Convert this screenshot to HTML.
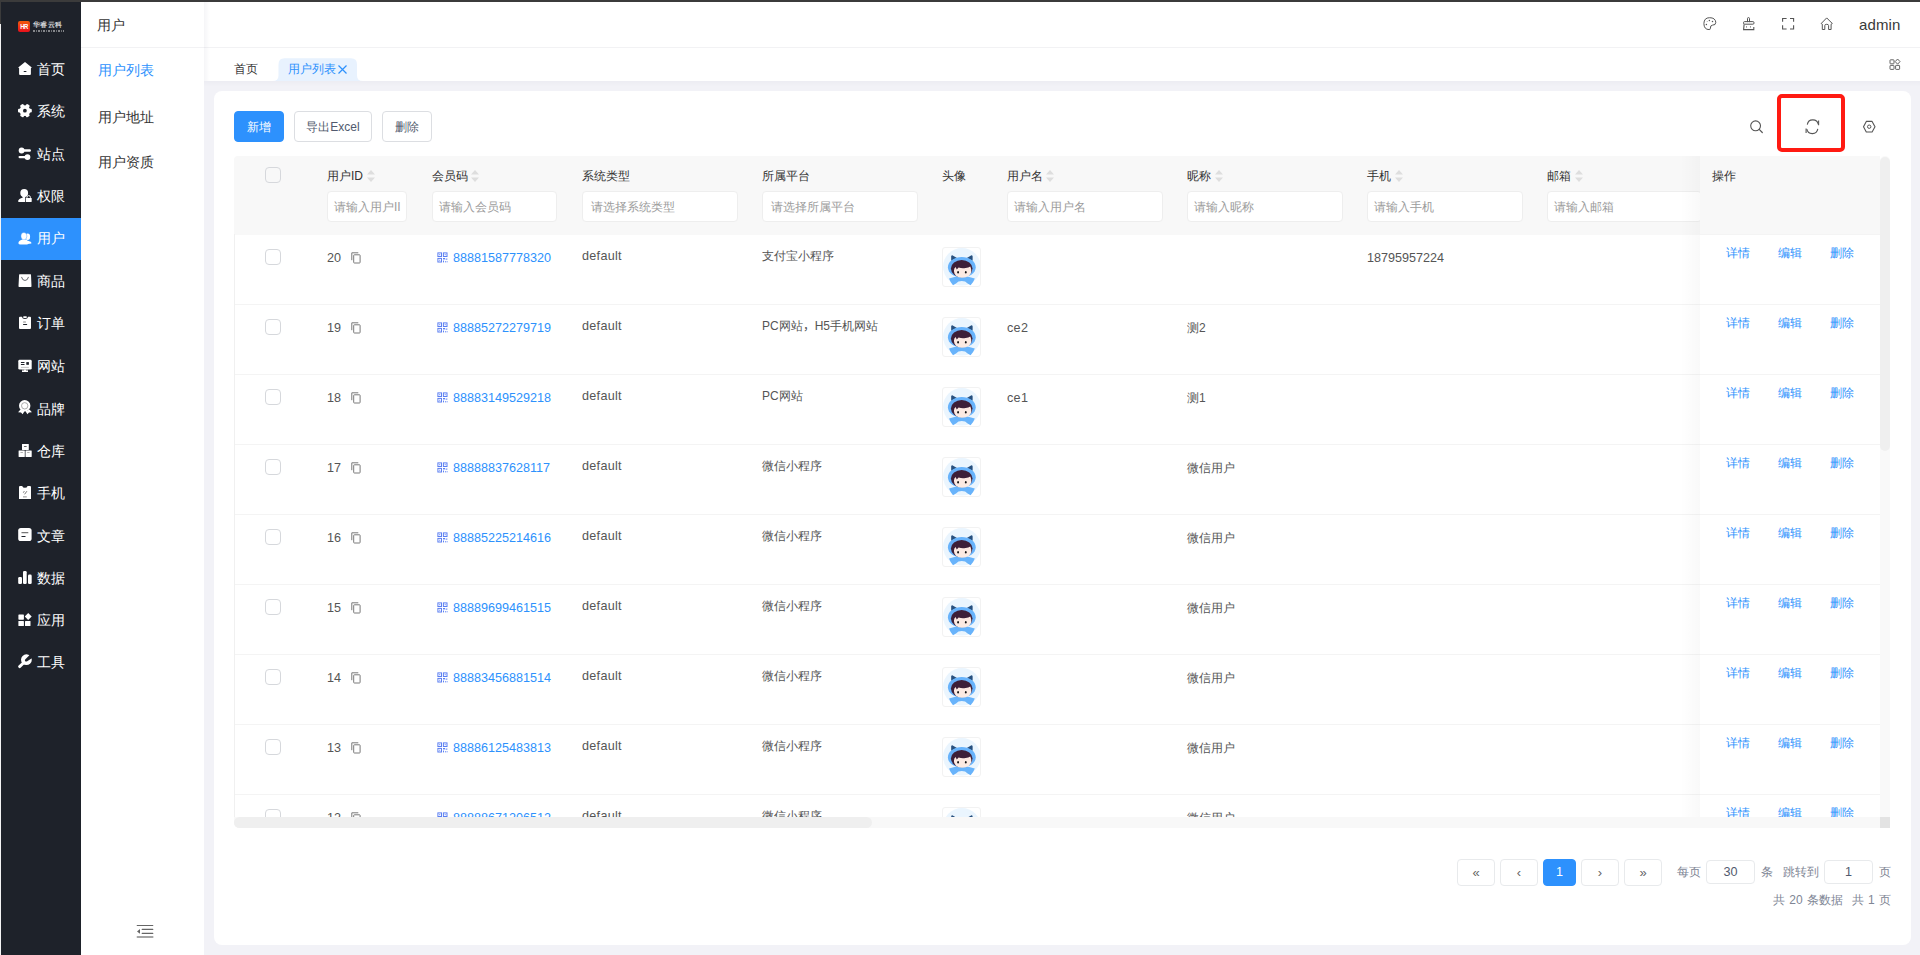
<!DOCTYPE html>
<html><head><meta charset="utf-8"><style>
*{box-sizing:border-box;margin:0;padding:0}
html,body{width:1920px;height:955px;overflow:hidden;background:#f2f2f7;font-family:"Liberation Sans",sans-serif;color:#333}
.abs{position:absolute}
.mtxt{position:absolute;left:37px;height:20px;line-height:20px;font-size:14px;color:#fff;font-weight:500}
#side2 .t{position:absolute;left:16px;top:13px;font-size:14px;line-height:20px;color:#333}
#side2 .it{position:absolute;left:17px;font-size:14px;line-height:20px;color:#333}
.btn{position:absolute;top:20px;height:31px;border-radius:4px;font-size:12px;font-weight:500;line-height:29px;padding-top:1px;text-align:center;border:1px solid #dcdee2;color:#515a6e;background:#fff}
.btn.pri{background:#2d91fd;border-color:#2d91fd;color:#fff}
.cb{width:16px;height:16px;border:1px solid #d6d8dc;border-radius:4px;background:#fff}
.hl{position:absolute;top:169px;font-size:12px;line-height:14px;color:#333;white-space:nowrap;font-weight:500}
.inp{position:absolute;top:191px;height:31px;padding-top:1px;border:1px solid #eeeeee;border-radius:4px;background:#fff;font-size:12px;line-height:28px;padding-left:6px;color:#9c9c9c;white-space:nowrap;overflow:hidden}
.td{position:absolute;font-size:12px;line-height:20px;color:#555;white-space:nowrap;font-weight:500}
.td.num{font-size:12.6px}
.td.lat{font-size:12.6px;letter-spacing:.3px}
.link{color:#2d91fd}
.op{position:absolute;font-size:12px;line-height:20px;color:#2d91fd;font-weight:500}
.pg{position:absolute;top:859px;height:27px;width:38px;border:1px solid #e8eaec;border-radius:4px;background:#fff;text-align:center;line-height:25px;font-size:13px;color:#666}
.pt{position:absolute;top:864px;font-size:12px;line-height:16px;color:#808695;white-space:nowrap}
.pin{position:absolute;top:860px;height:24px;width:49px;border:1px solid #e8eaec;border-radius:4px;text-align:center;line-height:22px;font-size:12.6px;color:#515a6e;background:#fff}
</style></head><body>
<div class="abs" style="left:0;top:0;width:1920px;height:2px;background:#3b3b3b;z-index:50"></div>
<div class="abs" style="left:0;top:0;width:1px;height:24px;background:#3b3b3b;z-index:50"></div>
<div class="abs" style="left:0;top:24px;width:1px;height:931px;background:#f4f4f4;z-index:50"></div>
<div class="abs" style="left:1px;top:2px;width:80px;height:953px;background:#1e222a"></div>
<div class="abs" style="left:18px;top:20.5px;width:12px;height:11.7px;border-radius:2px;background:linear-gradient(#f25a0c,#e8101c)"></div>
<div class="abs" style="left:18px;top:22.5px;width:12px;text-align:center;color:#fff;font-size:7px;font-weight:bold;line-height:8px;letter-spacing:-.6px;transform:scaleX(.85)">HR</div>
<div class="abs" style="left:33px;top:20px;color:#cfd0d2;font-size:7.4px;line-height:9px;font-weight:bold;letter-spacing:.4px">华睿云科</div>
<div class="abs" style="left:33px;top:30px;width:31px;height:2px;background:repeating-linear-gradient(90deg,#85878b 0 2px,#1e222a 2px 3px,#6d6f73 3px 4px,#1e222a 4px 5px)"></div>
<svg class="abs" style="left:14px;top:58px" width="22" height="22" viewBox="0 0 22 22"><path d="M11 3.9 L17.8 9.6 L16.9 10.2 V16 Q16.9 17 15.9 17 H6.1 Q5.1 17 5.1 16 V10.2 L4.2 9.6 Z" fill="#fff"/><rect x="9.6" y="13" width="2.9" height="1" rx=".5" fill="#1e222a"/></svg>
<div class="mtxt" style="top:59px">首页</div>
<svg class="abs" style="left:14px;top:100px" width="22" height="22" viewBox="0 0 22 22"><g transform="translate(10.9 10.7)" fill="#fff"><circle r="5.4"/><rect x="-1.9" y="-6.9" width="3.8" height="3.4" rx="1.1" transform="rotate(30)"/><rect x="-1.9" y="-6.9" width="3.8" height="3.4" rx="1.1" transform="rotate(90)"/><rect x="-1.9" y="-6.9" width="3.8" height="3.4" rx="1.1" transform="rotate(150)"/><rect x="-1.9" y="-6.9" width="3.8" height="3.4" rx="1.1" transform="rotate(210)"/><rect x="-1.9" y="-6.9" width="3.8" height="3.4" rx="1.1" transform="rotate(270)"/><rect x="-1.9" y="-6.9" width="3.8" height="3.4" rx="1.1" transform="rotate(330)"/></g><circle cx="10.9" cy="10.7" r="1.9" fill="#1e222a"/></svg>
<div class="mtxt" style="top:101px">系统</div>
<svg class="abs" style="left:14px;top:143px" width="22" height="22" viewBox="0 0 22 22"><circle cx="7.6" cy="7.5" r="2.9" fill="#fff"/><path d="M7.6 6.3 H16.3 L17.1 7.5 L16.3 8.7 H7.6Z" fill="#fff"/><circle cx="13.5" cy="14.1" r="2.9" fill="#fff"/><rect x="4.5" y="13" width="9" height="2.2" rx="1.1" fill="#fff"/></svg>
<div class="mtxt" style="top:144px">站点</div>
<svg class="abs" style="left:14px;top:185px" width="22" height="22" viewBox="0 0 22 22"><ellipse cx="10.2" cy="7.9" rx="3.9" ry="4" fill="#fff"/><path d="M8.3 11 L8.7 12.7 Q4.6 13.7 4.1 15.9 Q4 17 5 17 H11.1 V12.8 L11.7 11Z" fill="#fff"/><path d="M13 13.2 V12.3 Q13 10.6 14.7 10.6 Q16.4 10.6 16.4 12.3 V13.2" fill="none" stroke="#fff" stroke-width=".9"/><rect x="11.8" y="13.1" width="5.9" height="3.9" rx=".4" fill="#fff"/></svg>
<div class="mtxt" style="top:186px">权限</div>
<div class="abs" style="left:1px;top:218px;width:80px;height:42px;background:#2d91fd"></div>
<svg class="abs" style="left:14px;top:227px" width="22" height="22" viewBox="0 0 22 22"><ellipse cx="13.7" cy="9.8" rx="2.4" ry="3.3" fill="#fff"/><path d="M14 13.8 Q17.4 14.5 17.6 16 Q17.4 16.8 16 16.8 H12 Z" fill="#fff"/><ellipse cx="9.9" cy="9.1" rx="3" ry="3.7" fill="#fff" stroke="#2d91fd" stroke-width=".4"/><path d="M8.3 12.5 Q4.4 13.6 4.4 16.2 Q4.6 17.4 6.5 17.5 H13 Q14.8 17.4 14.9 16.3 Q14.7 13.6 11.5 12.6 Z" fill="#fff"/></svg>
<div class="mtxt" style="top:228px">用户</div>
<svg class="abs" style="left:14px;top:270px" width="22" height="22" viewBox="0 0 22 22"><path d="M5.6 4.2 H16.6 Q17 4.2 17 4.7 L17.5 16.3 Q17.5 17 16.8 17 H5.2 Q4.5 17 4.5 16.3 L5.1 4.7 Q5.1 4.2 5.6 4.2Z" fill="#fff"/><path d="M7.6 7.3 Q8.4 10.5 11 10.5 Q13.6 10.5 14.4 7.3" fill="none" stroke="#4a4d55" stroke-width=".85" stroke-linecap="round"/></svg>
<div class="mtxt" style="top:271px">商品</div>
<svg class="abs" style="left:14px;top:312px" width="22" height="22" viewBox="0 0 22 22"><path d="M5 5.7 Q5 4.8 6 4.8 H7.9 Q8.3 7 11 7 Q13.7 7 14.1 4.8 H16 Q17 4.8 17 5.7 V16 Q17 17 16 17 H6 Q5 17 5 16Z" fill="#fff"/><rect x="9.1" y="4.2" width="3.8" height="1.7" rx=".85" fill="#fff"/><rect x="9" y="9.4" width="3" height="1.1" rx=".5" fill="#888"/><rect x="9" y="12" width="4.2" height="1.1" rx=".55" fill="#1e222a"/></svg>
<div class="mtxt" style="top:313px">订单</div>
<svg class="abs" style="left:14px;top:354px" width="22" height="22" viewBox="0 0 22 22"><rect x="4.3" y="5.8" width="13.4" height="9.8" rx="1.4" fill="#fff"/><rect x="8" y="15.4" width="6" height="2.6" fill="#fff"/><rect x="6.9" y="8" width="3.6" height="1" fill="#1e222a"/><rect x="6.9" y="10" width="3.6" height="1" fill="#1e222a"/><rect x="12.3" y="8.1" width="2.6" height="2.7" fill="#1e222a"/><rect x="6.9" y="12.9" width="8" height=".9" fill="#bbb"/><rect x="8" y="15.4" width="2" height="1.4" fill="#999"/><rect x="12" y="15.4" width="2" height="1.4" fill="#999"/></svg>
<div class="mtxt" style="top:356px">网站</div>
<svg class="abs" style="left:14px;top:397px" width="22" height="22" viewBox="0 0 22 22"><path d="M6.5 12.5 L4.1 15.2 L7 15.6 L8.6 17.3 L10.5 14.2Z" fill="#fff"/><path d="M15.5 12.5 L17.9 15.2 L15 15.6 L13.4 17.3 L11.5 14.2Z" fill="#fff"/><circle cx="10.7" cy="8.8" r="5.7" fill="#fff"/><circle cx="10.7" cy="8.8" r="3.2" fill="none" stroke="#888" stroke-width=".7"/></svg>
<div class="mtxt" style="top:399px">品牌</div>
<svg class="abs" style="left:14px;top:439px" width="22" height="22" viewBox="0 0 22 22"><rect x="8" y="4.9" width="6.8" height="6" rx=".3" fill="#fff"/><rect x="4.6" y="11.6" width="6.2" height="6.3" rx=".3" fill="#fff"/><rect x="11.5" y="11.6" width="6.2" height="6.3" rx=".3" fill="#fff"/><rect x="9.8" y="7.1" width="3" height=".9" rx=".45" fill="#666"/><rect x="6.3" y="13.2" width="2.8" height=".8" rx=".4" fill="#999"/><rect x="13" y="13.2" width="2.8" height=".8" rx=".4" fill="#999"/></svg>
<div class="mtxt" style="top:441px">仓库</div>
<svg class="abs" style="left:14px;top:481px" width="22" height="22" viewBox="0 0 22 22"><path d="M5 5.8 Q5 4.9 6.2 4.9 H8.2 Q8.8 6.8 10.9 6.8 Q13 6.8 13.6 4.9 H15.8 Q17 4.9 17 5.8 V17.9 H5Z" fill="#fff"/><path d="M10.3 10.1 L9.3 11.7 M12.9 10.2 L10.6 13.3" stroke="#555" stroke-width=".8"/><rect x="9" y="15.2" width="3.8" height="1.3" fill="#aaa"/></svg>
<div class="mtxt" style="top:483px">手机</div>
<svg class="abs" style="left:14px;top:524px" width="22" height="22" viewBox="0 0 22 22"><rect x="4.2" y="4" width="13.4" height="13" rx="2.6" fill="#fff"/><rect x="7.4" y="8.1" width="7" height="1.1" rx=".5" fill="#777"/><rect x="7.4" y="12" width="4.2" height="1" rx=".5" fill="#1e222a"/></svg>
<div class="mtxt" style="top:526px">文章</div>
<svg class="abs" style="left:14px;top:566px" width="22" height="22" viewBox="0 0 22 22"><rect x="4.2" y="11" width="3.8" height="7" rx="1.2" fill="#fff"/><rect x="9" y="5" width="3.7" height="13" rx="1.3" fill="#fff"/><rect x="14" y="8.6" width="3.7" height="9.4" rx="1.3" fill="#fff"/></svg>
<div class="mtxt" style="top:568px">数据</div>
<svg class="abs" style="left:14px;top:608px" width="22" height="22" viewBox="0 0 22 22"><rect x="4.4" y="6.4" width="5.5" height="5.3" rx=".6" fill="#fff"/><rect x="4.4" y="13" width="5.5" height="5" rx=".5" fill="#fff"/><rect x="11" y="13" width="5.5" height="5" rx=".5" fill="#fff"/><path d="M14.2 5 L17.7 8.6 L14.2 12 L10.8 8.6Z" fill="#fff"/></svg>
<div class="mtxt" style="top:610px">应用</div>
<svg class="abs" style="left:14px;top:650px" width="22" height="22" viewBox="0 0 22 22"><circle cx="12.4" cy="9.7" r="5.4" fill="#fff"/><path d="M10.2 12.2 L5.6 16.6" stroke="#fff" stroke-width="2.9" stroke-linecap="round"/><path d="M11 10.9 Q10.6 10 11.4 9.2 L15.6 5 L18.8 5.4 L19 7.5 L13.2 11.2 Q12 11.8 11 10.9Z" fill="#1e222a"/></svg>
<div class="mtxt" style="top:652px">工具</div>
<div id="side2" class="abs" style="left:81px;top:2px;width:123px;height:953px;background:#fff">
  <div class="t">用户</div>
  <div class="it" style="top:58px;color:#2d91fd">用户列表</div>
  <div class="it" style="top:105px">用户地址</div>
  <div class="it" style="top:150px">用户资质</div>
</div>
<svg class="abs" style="left:130px;top:920px" width="30" height="22" viewBox="0 0 30 22">
 <path d="M7.2 5.5 H22.8 M12.2 9.4 H22.8 M12.2 13.4 H22.8" stroke="#666" stroke-width="1.1" stroke-linecap="round"/>
 <path d="M7.3 17.1 H22.8" stroke="#888" stroke-width="1.5" stroke-linecap="round"/>
 <path d="M7 11.4 L10 9 V13.8Z" fill="#666"/>
</svg>
<div class="abs" style="left:204px;top:2px;width:1716px;height:45px;background:#fff"></div>
<div class="abs" style="left:204px;top:48px;width:1716px;height:33px;background:#fff"></div>
<div class="abs" style="left:81px;top:47px;width:1839px;height:1px;background:#f2f2f4"></div>
<div class="abs" style="left:204px;top:2px;width:6px;height:79px;background:linear-gradient(90deg,rgba(0,0,60,.04),rgba(0,0,60,0))"></div>
<div class="abs" style="left:204px;top:81px;width:1716px;height:6px;background:linear-gradient(rgba(0,0,60,.025),rgba(0,0,60,0))"></div>

<svg class="abs" style="left:1700px;top:14px" width="60" height="20" viewBox="0 0 60 20">
 <path d="M9.6 3.7 Q4 3.7 3.9 9.6 Q4 15.6 9.2 15.6 Q10.4 15.6 10.4 14.2 Q10.2 11.2 12.6 11.1 Q15.8 11.3 15.8 8.3 Q15.3 3.7 9.6 3.7Z" fill="none" stroke="#555" stroke-width="1"/>
 <circle cx="9.4" cy="6.5" r=".75" fill="#555"/><circle cx="12.5" cy="7.4" r=".75" fill="#555"/><circle cx="6.4" cy="10.4" r=".75" fill="#555"/><circle cx="7.2" cy="7.5" r=".6" fill="#aaa"/>
 <path d="M47.5 8.1 V4.4 Q47.5 3.6 48.5 3.6 Q49.5 3.6 49.5 4.4 V8.1" fill="none" stroke="#555" stroke-width="1"/>
 <rect x="43.5" y="7.6" width="10.5" height="2.6" rx="1.1" fill="none" stroke="#555" stroke-width="1"/>
 <path d="M44.1 10.4 L43.6 15.6 H53.8 V13" fill="none" stroke="#555" stroke-width="1.1"/>
 <path d="M46.5 12.2 V13.6 M50.5 12.2 V13.6" stroke="#666" stroke-width=".8"/>
</svg>
<svg class="abs" style="left:1778px;top:14px" width="60" height="20" viewBox="0 0 60 20">
 <path d="M4.6 7.7 V4.5 H8.6 M12 4.5 H15.6 V7.7 M15.6 11.2 V15 H12 M8.6 15 H4.6 V11.2" fill="none" stroke="#555" stroke-width="1.1"/>
 <path d="M43.2 9.5 L48.7 3.9 L54.3 9.5 L53.1 10.2 V15.5 H50.6 V11.5 Q50.6 10.3 48.7 10.3 Q46.8 10.3 46.8 11.5 V15.5 H44.3 V10.2 Z" fill="none" stroke="#555" stroke-width="1" stroke-linejoin="round"/>
</svg>

<div class="abs" style="left:1859px;top:16px;font-size:15px;line-height:18px;color:#3a3a3a;letter-spacing:.1px">admin</div>
<div class="abs" style="left:234px;top:61px;font-size:12px;line-height:16px;color:#333">首页</div>
<svg class="abs" style="left:270px;top:57px" width="96" height="24" viewBox="0 0 96 24"><path d="M2.5 24 Q8.5 24 8.5 18.5 V7.5 Q8.5 1.3 14.5 1.3 H81 Q87 1.3 87 7.5 V18.5 Q87 24 93 24Z" fill="#e8f2fe"/></svg>
<div class="abs" style="left:288px;top:61px;font-size:12px;line-height:16px;color:#2d91fd">用户列表</div>
<svg class="abs" style="left:337px;top:64px" width="11" height="11" viewBox="0 0 11 11"><path d="M1.5 1.5 L9.5 9.5 M9.5 1.5 L1.5 9.5" stroke="#2d91fd" stroke-width="1.2"/></svg>
<svg class="abs" style="left:1886px;top:56px" width="18" height="18" viewBox="0 0 18 18">
<rect x="4" y="3.8" width="4" height="4" rx=".6" fill="none" stroke="#555" stroke-width=".9"/>
<rect x="4" y="9.4" width="4" height="4" rx=".6" fill="none" stroke="#555" stroke-width=".9"/>
<rect x="9.6" y="9.4" width="4" height="4" rx=".6" fill="none" stroke="#555" stroke-width=".9"/>
<path d="M11.6 3 L14 5.6 L11.6 8.2 L9.2 5.6Z" fill="none" stroke="#555" stroke-width=".9" stroke-linejoin="round"/>
</svg>
<div class="abs" style="left:214px;top:91px;width:1697px;height:854px;background:#fff;border-radius:8px"></div>
<div class="btn pri" style="left:234px;top:111px;width:50px">新增</div>
<div class="btn" style="left:294px;top:111px;width:78px">导出Excel</div>
<div class="btn" style="left:382px;top:111px;width:50px">删除</div>
<svg class="abs" style="left:1745px;top:115px" width="140" height="24" viewBox="0 0 140 24">
 <circle cx="10.6" cy="10.8" r="4.9" fill="none" stroke="#555" stroke-width="1.1"/>
 <path d="M14.2 14.4 L17.3 17.5" stroke="#555" stroke-width="1.2" stroke-linecap="round"/>
 <path d="M73.3 9.3 A5.6 5.6 0 0 0 62.3 9.6" fill="none" stroke="#555" stroke-width="1.1"/>
 <path d="M61.8 14.2 A5.6 5.6 0 0 0 72.8 13.9" fill="none" stroke="#555" stroke-width="1.1"/>
 <path d="M73.6 5.5 V10.2" fill="none" stroke="#555" stroke-width="1.1"/>
 <path d="M61.1 13.4 V18" fill="none" stroke="#555" stroke-width="1.1"/>
 <path d="M121.3 6.4 H127.1 L130 11.8 L127.1 17 H121.3 L118.5 11.8Z" fill="none" stroke="#555" stroke-width="1.1" stroke-linejoin="round"/>
 <circle cx="124.2" cy="11.7" r="1.7" fill="none" stroke="#555" stroke-width="1"/>
</svg>
<div class="abs" style="left:1777px;top:94px;width:68px;height:58px;border:4px solid #ff1a12;border-radius:5px"></div>
<div class="abs" style="left:234px;top:156px;width:1646px;height:661px;overflow:hidden">
<div class="abs" style="left:-234px;top:-156px;width:1920px;height:955px">
<div class="abs" style="left:234px;top:156px;width:1646px;height:79px;background:#f8f8f8;border-radius:4px 4px 0 0"></div>
<div class="abs cb" style="left:265px;top:167px;background:transparent"></div>
<div class="hl" style="left:327px">用户ID</div>
<svg class="abs" style="left:366px;top:169px" width="10" height="14" viewBox="0 0 10 14"><path d="M1 5.5 L5 1 L9 5.5Z M1 8.5 L5 13 L9 8.5Z" fill="#dedede"/></svg>
<div class="inp" style="left:327px;width:80px;padding-left:6px">请输入用户II</div>
<div class="hl" style="left:432px">会员码</div>
<svg class="abs" style="left:470px;top:169px" width="10" height="14" viewBox="0 0 10 14"><path d="M1 5.5 L5 1 L9 5.5Z M1 8.5 L5 13 L9 8.5Z" fill="#dedede"/></svg>
<div class="inp" style="left:432px;width:125px;padding-left:6px">请输入会员码</div>
<div class="hl" style="left:582px">系统类型</div>
<div class="inp" style="left:582px;width:156px;padding-left:8px">请选择系统类型</div>
<div class="hl" style="left:762px">所属平台</div>
<div class="inp" style="left:762px;width:156px;padding-left:8px">请选择所属平台</div>
<div class="hl" style="left:942px">头像</div>
<div class="hl" style="left:1007px">用户名</div>
<svg class="abs" style="left:1045px;top:169px" width="10" height="14" viewBox="0 0 10 14"><path d="M1 5.5 L5 1 L9 5.5Z M1 8.5 L5 13 L9 8.5Z" fill="#dedede"/></svg>
<div class="inp" style="left:1007px;width:156px;padding-left:6px">请输入用户名</div>
<div class="hl" style="left:1187px">昵称</div>
<svg class="abs" style="left:1214px;top:169px" width="10" height="14" viewBox="0 0 10 14"><path d="M1 5.5 L5 1 L9 5.5Z M1 8.5 L5 13 L9 8.5Z" fill="#dedede"/></svg>
<div class="inp" style="left:1187px;width:156px;padding-left:6px">请输入昵称</div>
<div class="hl" style="left:1367px">手机</div>
<svg class="abs" style="left:1394px;top:169px" width="10" height="14" viewBox="0 0 10 14"><path d="M1 5.5 L5 1 L9 5.5Z M1 8.5 L5 13 L9 8.5Z" fill="#dedede"/></svg>
<div class="inp" style="left:1367px;width:156px;padding-left:6px">请输入手机</div>
<div class="hl" style="left:1547px">邮箱</div>
<svg class="abs" style="left:1574px;top:169px" width="10" height="14" viewBox="0 0 10 14"><path d="M1 5.5 L5 1 L9 5.5Z M1 8.5 L5 13 L9 8.5Z" fill="#dedede"/></svg>
<div class="inp" style="left:1547px;width:155px;padding-left:6px">请输入邮箱</div>
<div class="abs cb" style="left:265px;top:249px"></div>
<div class="td num" style="left:327px;top:248px">20</div>
<svg class="abs" style="left:351px;top:252px" width="12" height="13" viewBox="0 0 12 13"><path d="M.8 8.2 V.8 H7.3" fill="none" stroke="#7a7a7a" stroke-width="1"/><rect x="2.7" y="2.8" width="6.4" height="8.2" rx=".6" fill="none" stroke="#7a7a7a" stroke-width="1"/></svg>
<svg class="abs" style="left:437px;top:252px" width="11" height="11" viewBox="0 0 11 11"><g fill="none" stroke="#5b7ff2" stroke-width="1"><rect x=".9" y=".9" width="3.6" height="3.6"/><rect x="6.4" y=".9" width="3.6" height="3.6"/><rect x=".9" y="6.4" width="3.6" height="3.6"/></g><g fill="#5b7ff2"><rect x="2.2" y="2.2" width="1" height="1"/><rect x="7.7" y="2.2" width="1" height="1"/><rect x="2.2" y="7.7" width="1" height="1"/><rect x="6" y="6" width="2" height="1.4"/><rect x="8.6" y="6.6" width="1.8" height="1"/><rect x="6" y="8.6" width="1" height="1.8"/><rect x="8" y="9.3" width="1" height="1"/><rect x="9.6" y="9.3" width="1" height="1"/></g></svg>
<div class="td num link" style="left:453px;top:248px">88881587778320</div>
<div class="td lat" style="left:582px;top:246px">default</div>
<div class="td" style="left:762px;top:246px">支付宝小程序</div>
<div class="abs" style="left:942px;top:247px;width:39px;height:40px;border:1px solid #f2f2f2;border-radius:3px;background:#fff;overflow:hidden">
<svg width="39" height="40" viewBox="0 0 39 40" style="position:absolute;left:-1px;top:-1px">
<circle cx="19.9" cy="19.8" r="18.8" fill="#eaf5fe"/>
<path d="M10.3 8.3 Q9.4 8.2 9.2 9.4 L9.2 13.8 L15 11 Z" fill="#27507f"/>
<path d="M29.5 8.3 Q30.4 8.2 30.6 9.4 L30.6 13.8 L24.8 11 Z" fill="#27507f"/>
<ellipse cx="19.8" cy="20.2" rx="13.9" ry="10.3" fill="#68b3fb"/>
<path d="M7 31.6 Q12.5 29.2 19.8 29.4 Q27.1 29.2 32.8 31.6 Q31.4 35.6 28.6 38.2 L25.6 36.4 Q23.5 34.1 19.8 34.1 Q16.1 34.1 14 36.4 L11 38.2 Q8.4 35.6 7 31.6Z" fill="#68b3fb"/>
<ellipse cx="19.7" cy="21.6" rx="10.8" ry="8.6" fill="#3d2039"/>
<path d="M11.9 24 Q12 21.2 13.6 20 L14.8 22.6 L16.6 20.6 Q20 21.8 23.6 21.1 Q26.6 20.5 28.3 19.4 Q29.4 21.6 29.3 24.4 Q28.8 30.4 20 30.8 Q12.4 30.4 11.9 24Z" fill="#fdeae2"/>
<ellipse cx="16.1" cy="25.3" rx=".85" ry="1.2" fill="#111"/><ellipse cx="23.8" cy="25.3" rx=".85" ry="1.2" fill="#111"/>
</svg></div>
<div class="td num" style="left:1367px;top:248px">18795957224</div>
<div class="abs" style="left:234px;top:304px;width:1646px;height:1px;background:#f4f4f4"></div>
<div class="abs cb" style="left:265px;top:319px"></div>
<div class="td num" style="left:327px;top:318px">19</div>
<svg class="abs" style="left:351px;top:322px" width="12" height="13" viewBox="0 0 12 13"><path d="M.8 8.2 V.8 H7.3" fill="none" stroke="#7a7a7a" stroke-width="1"/><rect x="2.7" y="2.8" width="6.4" height="8.2" rx=".6" fill="none" stroke="#7a7a7a" stroke-width="1"/></svg>
<svg class="abs" style="left:437px;top:322px" width="11" height="11" viewBox="0 0 11 11"><g fill="none" stroke="#5b7ff2" stroke-width="1"><rect x=".9" y=".9" width="3.6" height="3.6"/><rect x="6.4" y=".9" width="3.6" height="3.6"/><rect x=".9" y="6.4" width="3.6" height="3.6"/></g><g fill="#5b7ff2"><rect x="2.2" y="2.2" width="1" height="1"/><rect x="7.7" y="2.2" width="1" height="1"/><rect x="2.2" y="7.7" width="1" height="1"/><rect x="6" y="6" width="2" height="1.4"/><rect x="8.6" y="6.6" width="1.8" height="1"/><rect x="6" y="8.6" width="1" height="1.8"/><rect x="8" y="9.3" width="1" height="1"/><rect x="9.6" y="9.3" width="1" height="1"/></g></svg>
<div class="td num link" style="left:453px;top:318px">88885272279719</div>
<div class="td lat" style="left:582px;top:316px">default</div>
<div class="td" style="left:762px;top:316px">PC网站<span lang="zh-CN">，</span>H5手机网站</div>
<div class="abs" style="left:942px;top:317px;width:39px;height:40px;border:1px solid #f2f2f2;border-radius:3px;background:#fff;overflow:hidden">
<svg width="39" height="40" viewBox="0 0 39 40" style="position:absolute;left:-1px;top:-1px">
<circle cx="19.9" cy="19.8" r="18.8" fill="#eaf5fe"/>
<path d="M10.3 8.3 Q9.4 8.2 9.2 9.4 L9.2 13.8 L15 11 Z" fill="#27507f"/>
<path d="M29.5 8.3 Q30.4 8.2 30.6 9.4 L30.6 13.8 L24.8 11 Z" fill="#27507f"/>
<ellipse cx="19.8" cy="20.2" rx="13.9" ry="10.3" fill="#68b3fb"/>
<path d="M7 31.6 Q12.5 29.2 19.8 29.4 Q27.1 29.2 32.8 31.6 Q31.4 35.6 28.6 38.2 L25.6 36.4 Q23.5 34.1 19.8 34.1 Q16.1 34.1 14 36.4 L11 38.2 Q8.4 35.6 7 31.6Z" fill="#68b3fb"/>
<ellipse cx="19.7" cy="21.6" rx="10.8" ry="8.6" fill="#3d2039"/>
<path d="M11.9 24 Q12 21.2 13.6 20 L14.8 22.6 L16.6 20.6 Q20 21.8 23.6 21.1 Q26.6 20.5 28.3 19.4 Q29.4 21.6 29.3 24.4 Q28.8 30.4 20 30.8 Q12.4 30.4 11.9 24Z" fill="#fdeae2"/>
<ellipse cx="16.1" cy="25.3" rx=".85" ry="1.2" fill="#111"/><ellipse cx="23.8" cy="25.3" rx=".85" ry="1.2" fill="#111"/>
</svg></div>
<div class="td lat" style="left:1007px;top:318px">ce2</div>
<div class="td" style="left:1187px;top:318px">测2</div>
<div class="abs" style="left:234px;top:374px;width:1646px;height:1px;background:#f4f4f4"></div>
<div class="abs cb" style="left:265px;top:389px"></div>
<div class="td num" style="left:327px;top:388px">18</div>
<svg class="abs" style="left:351px;top:392px" width="12" height="13" viewBox="0 0 12 13"><path d="M.8 8.2 V.8 H7.3" fill="none" stroke="#7a7a7a" stroke-width="1"/><rect x="2.7" y="2.8" width="6.4" height="8.2" rx=".6" fill="none" stroke="#7a7a7a" stroke-width="1"/></svg>
<svg class="abs" style="left:437px;top:392px" width="11" height="11" viewBox="0 0 11 11"><g fill="none" stroke="#5b7ff2" stroke-width="1"><rect x=".9" y=".9" width="3.6" height="3.6"/><rect x="6.4" y=".9" width="3.6" height="3.6"/><rect x=".9" y="6.4" width="3.6" height="3.6"/></g><g fill="#5b7ff2"><rect x="2.2" y="2.2" width="1" height="1"/><rect x="7.7" y="2.2" width="1" height="1"/><rect x="2.2" y="7.7" width="1" height="1"/><rect x="6" y="6" width="2" height="1.4"/><rect x="8.6" y="6.6" width="1.8" height="1"/><rect x="6" y="8.6" width="1" height="1.8"/><rect x="8" y="9.3" width="1" height="1"/><rect x="9.6" y="9.3" width="1" height="1"/></g></svg>
<div class="td num link" style="left:453px;top:388px">88883149529218</div>
<div class="td lat" style="left:582px;top:386px">default</div>
<div class="td" style="left:762px;top:386px">PC网站</div>
<div class="abs" style="left:942px;top:387px;width:39px;height:40px;border:1px solid #f2f2f2;border-radius:3px;background:#fff;overflow:hidden">
<svg width="39" height="40" viewBox="0 0 39 40" style="position:absolute;left:-1px;top:-1px">
<circle cx="19.9" cy="19.8" r="18.8" fill="#eaf5fe"/>
<path d="M10.3 8.3 Q9.4 8.2 9.2 9.4 L9.2 13.8 L15 11 Z" fill="#27507f"/>
<path d="M29.5 8.3 Q30.4 8.2 30.6 9.4 L30.6 13.8 L24.8 11 Z" fill="#27507f"/>
<ellipse cx="19.8" cy="20.2" rx="13.9" ry="10.3" fill="#68b3fb"/>
<path d="M7 31.6 Q12.5 29.2 19.8 29.4 Q27.1 29.2 32.8 31.6 Q31.4 35.6 28.6 38.2 L25.6 36.4 Q23.5 34.1 19.8 34.1 Q16.1 34.1 14 36.4 L11 38.2 Q8.4 35.6 7 31.6Z" fill="#68b3fb"/>
<ellipse cx="19.7" cy="21.6" rx="10.8" ry="8.6" fill="#3d2039"/>
<path d="M11.9 24 Q12 21.2 13.6 20 L14.8 22.6 L16.6 20.6 Q20 21.8 23.6 21.1 Q26.6 20.5 28.3 19.4 Q29.4 21.6 29.3 24.4 Q28.8 30.4 20 30.8 Q12.4 30.4 11.9 24Z" fill="#fdeae2"/>
<ellipse cx="16.1" cy="25.3" rx=".85" ry="1.2" fill="#111"/><ellipse cx="23.8" cy="25.3" rx=".85" ry="1.2" fill="#111"/>
</svg></div>
<div class="td lat" style="left:1007px;top:388px">ce1</div>
<div class="td" style="left:1187px;top:388px">测1</div>
<div class="abs" style="left:234px;top:444px;width:1646px;height:1px;background:#f4f4f4"></div>
<div class="abs cb" style="left:265px;top:459px"></div>
<div class="td num" style="left:327px;top:458px">17</div>
<svg class="abs" style="left:351px;top:462px" width="12" height="13" viewBox="0 0 12 13"><path d="M.8 8.2 V.8 H7.3" fill="none" stroke="#7a7a7a" stroke-width="1"/><rect x="2.7" y="2.8" width="6.4" height="8.2" rx=".6" fill="none" stroke="#7a7a7a" stroke-width="1"/></svg>
<svg class="abs" style="left:437px;top:462px" width="11" height="11" viewBox="0 0 11 11"><g fill="none" stroke="#5b7ff2" stroke-width="1"><rect x=".9" y=".9" width="3.6" height="3.6"/><rect x="6.4" y=".9" width="3.6" height="3.6"/><rect x=".9" y="6.4" width="3.6" height="3.6"/></g><g fill="#5b7ff2"><rect x="2.2" y="2.2" width="1" height="1"/><rect x="7.7" y="2.2" width="1" height="1"/><rect x="2.2" y="7.7" width="1" height="1"/><rect x="6" y="6" width="2" height="1.4"/><rect x="8.6" y="6.6" width="1.8" height="1"/><rect x="6" y="8.6" width="1" height="1.8"/><rect x="8" y="9.3" width="1" height="1"/><rect x="9.6" y="9.3" width="1" height="1"/></g></svg>
<div class="td num link" style="left:453px;top:458px">88888837628117</div>
<div class="td lat" style="left:582px;top:456px">default</div>
<div class="td" style="left:762px;top:456px">微信小程序</div>
<div class="abs" style="left:942px;top:457px;width:39px;height:40px;border:1px solid #f2f2f2;border-radius:3px;background:#fff;overflow:hidden">
<svg width="39" height="40" viewBox="0 0 39 40" style="position:absolute;left:-1px;top:-1px">
<circle cx="19.9" cy="19.8" r="18.8" fill="#eaf5fe"/>
<path d="M10.3 8.3 Q9.4 8.2 9.2 9.4 L9.2 13.8 L15 11 Z" fill="#27507f"/>
<path d="M29.5 8.3 Q30.4 8.2 30.6 9.4 L30.6 13.8 L24.8 11 Z" fill="#27507f"/>
<ellipse cx="19.8" cy="20.2" rx="13.9" ry="10.3" fill="#68b3fb"/>
<path d="M7 31.6 Q12.5 29.2 19.8 29.4 Q27.1 29.2 32.8 31.6 Q31.4 35.6 28.6 38.2 L25.6 36.4 Q23.5 34.1 19.8 34.1 Q16.1 34.1 14 36.4 L11 38.2 Q8.4 35.6 7 31.6Z" fill="#68b3fb"/>
<ellipse cx="19.7" cy="21.6" rx="10.8" ry="8.6" fill="#3d2039"/>
<path d="M11.9 24 Q12 21.2 13.6 20 L14.8 22.6 L16.6 20.6 Q20 21.8 23.6 21.1 Q26.6 20.5 28.3 19.4 Q29.4 21.6 29.3 24.4 Q28.8 30.4 20 30.8 Q12.4 30.4 11.9 24Z" fill="#fdeae2"/>
<ellipse cx="16.1" cy="25.3" rx=".85" ry="1.2" fill="#111"/><ellipse cx="23.8" cy="25.3" rx=".85" ry="1.2" fill="#111"/>
</svg></div>
<div class="td" style="left:1187px;top:458px">微信用户</div>
<div class="abs" style="left:234px;top:514px;width:1646px;height:1px;background:#f4f4f4"></div>
<div class="abs cb" style="left:265px;top:529px"></div>
<div class="td num" style="left:327px;top:528px">16</div>
<svg class="abs" style="left:351px;top:532px" width="12" height="13" viewBox="0 0 12 13"><path d="M.8 8.2 V.8 H7.3" fill="none" stroke="#7a7a7a" stroke-width="1"/><rect x="2.7" y="2.8" width="6.4" height="8.2" rx=".6" fill="none" stroke="#7a7a7a" stroke-width="1"/></svg>
<svg class="abs" style="left:437px;top:532px" width="11" height="11" viewBox="0 0 11 11"><g fill="none" stroke="#5b7ff2" stroke-width="1"><rect x=".9" y=".9" width="3.6" height="3.6"/><rect x="6.4" y=".9" width="3.6" height="3.6"/><rect x=".9" y="6.4" width="3.6" height="3.6"/></g><g fill="#5b7ff2"><rect x="2.2" y="2.2" width="1" height="1"/><rect x="7.7" y="2.2" width="1" height="1"/><rect x="2.2" y="7.7" width="1" height="1"/><rect x="6" y="6" width="2" height="1.4"/><rect x="8.6" y="6.6" width="1.8" height="1"/><rect x="6" y="8.6" width="1" height="1.8"/><rect x="8" y="9.3" width="1" height="1"/><rect x="9.6" y="9.3" width="1" height="1"/></g></svg>
<div class="td num link" style="left:453px;top:528px">88885225214616</div>
<div class="td lat" style="left:582px;top:526px">default</div>
<div class="td" style="left:762px;top:526px">微信小程序</div>
<div class="abs" style="left:942px;top:527px;width:39px;height:40px;border:1px solid #f2f2f2;border-radius:3px;background:#fff;overflow:hidden">
<svg width="39" height="40" viewBox="0 0 39 40" style="position:absolute;left:-1px;top:-1px">
<circle cx="19.9" cy="19.8" r="18.8" fill="#eaf5fe"/>
<path d="M10.3 8.3 Q9.4 8.2 9.2 9.4 L9.2 13.8 L15 11 Z" fill="#27507f"/>
<path d="M29.5 8.3 Q30.4 8.2 30.6 9.4 L30.6 13.8 L24.8 11 Z" fill="#27507f"/>
<ellipse cx="19.8" cy="20.2" rx="13.9" ry="10.3" fill="#68b3fb"/>
<path d="M7 31.6 Q12.5 29.2 19.8 29.4 Q27.1 29.2 32.8 31.6 Q31.4 35.6 28.6 38.2 L25.6 36.4 Q23.5 34.1 19.8 34.1 Q16.1 34.1 14 36.4 L11 38.2 Q8.4 35.6 7 31.6Z" fill="#68b3fb"/>
<ellipse cx="19.7" cy="21.6" rx="10.8" ry="8.6" fill="#3d2039"/>
<path d="M11.9 24 Q12 21.2 13.6 20 L14.8 22.6 L16.6 20.6 Q20 21.8 23.6 21.1 Q26.6 20.5 28.3 19.4 Q29.4 21.6 29.3 24.4 Q28.8 30.4 20 30.8 Q12.4 30.4 11.9 24Z" fill="#fdeae2"/>
<ellipse cx="16.1" cy="25.3" rx=".85" ry="1.2" fill="#111"/><ellipse cx="23.8" cy="25.3" rx=".85" ry="1.2" fill="#111"/>
</svg></div>
<div class="td" style="left:1187px;top:528px">微信用户</div>
<div class="abs" style="left:234px;top:584px;width:1646px;height:1px;background:#f4f4f4"></div>
<div class="abs cb" style="left:265px;top:599px"></div>
<div class="td num" style="left:327px;top:598px">15</div>
<svg class="abs" style="left:351px;top:602px" width="12" height="13" viewBox="0 0 12 13"><path d="M.8 8.2 V.8 H7.3" fill="none" stroke="#7a7a7a" stroke-width="1"/><rect x="2.7" y="2.8" width="6.4" height="8.2" rx=".6" fill="none" stroke="#7a7a7a" stroke-width="1"/></svg>
<svg class="abs" style="left:437px;top:602px" width="11" height="11" viewBox="0 0 11 11"><g fill="none" stroke="#5b7ff2" stroke-width="1"><rect x=".9" y=".9" width="3.6" height="3.6"/><rect x="6.4" y=".9" width="3.6" height="3.6"/><rect x=".9" y="6.4" width="3.6" height="3.6"/></g><g fill="#5b7ff2"><rect x="2.2" y="2.2" width="1" height="1"/><rect x="7.7" y="2.2" width="1" height="1"/><rect x="2.2" y="7.7" width="1" height="1"/><rect x="6" y="6" width="2" height="1.4"/><rect x="8.6" y="6.6" width="1.8" height="1"/><rect x="6" y="8.6" width="1" height="1.8"/><rect x="8" y="9.3" width="1" height="1"/><rect x="9.6" y="9.3" width="1" height="1"/></g></svg>
<div class="td num link" style="left:453px;top:598px">88889699461515</div>
<div class="td lat" style="left:582px;top:596px">default</div>
<div class="td" style="left:762px;top:596px">微信小程序</div>
<div class="abs" style="left:942px;top:597px;width:39px;height:40px;border:1px solid #f2f2f2;border-radius:3px;background:#fff;overflow:hidden">
<svg width="39" height="40" viewBox="0 0 39 40" style="position:absolute;left:-1px;top:-1px">
<circle cx="19.9" cy="19.8" r="18.8" fill="#eaf5fe"/>
<path d="M10.3 8.3 Q9.4 8.2 9.2 9.4 L9.2 13.8 L15 11 Z" fill="#27507f"/>
<path d="M29.5 8.3 Q30.4 8.2 30.6 9.4 L30.6 13.8 L24.8 11 Z" fill="#27507f"/>
<ellipse cx="19.8" cy="20.2" rx="13.9" ry="10.3" fill="#68b3fb"/>
<path d="M7 31.6 Q12.5 29.2 19.8 29.4 Q27.1 29.2 32.8 31.6 Q31.4 35.6 28.6 38.2 L25.6 36.4 Q23.5 34.1 19.8 34.1 Q16.1 34.1 14 36.4 L11 38.2 Q8.4 35.6 7 31.6Z" fill="#68b3fb"/>
<ellipse cx="19.7" cy="21.6" rx="10.8" ry="8.6" fill="#3d2039"/>
<path d="M11.9 24 Q12 21.2 13.6 20 L14.8 22.6 L16.6 20.6 Q20 21.8 23.6 21.1 Q26.6 20.5 28.3 19.4 Q29.4 21.6 29.3 24.4 Q28.8 30.4 20 30.8 Q12.4 30.4 11.9 24Z" fill="#fdeae2"/>
<ellipse cx="16.1" cy="25.3" rx=".85" ry="1.2" fill="#111"/><ellipse cx="23.8" cy="25.3" rx=".85" ry="1.2" fill="#111"/>
</svg></div>
<div class="td" style="left:1187px;top:598px">微信用户</div>
<div class="abs" style="left:234px;top:654px;width:1646px;height:1px;background:#f4f4f4"></div>
<div class="abs cb" style="left:265px;top:669px"></div>
<div class="td num" style="left:327px;top:668px">14</div>
<svg class="abs" style="left:351px;top:672px" width="12" height="13" viewBox="0 0 12 13"><path d="M.8 8.2 V.8 H7.3" fill="none" stroke="#7a7a7a" stroke-width="1"/><rect x="2.7" y="2.8" width="6.4" height="8.2" rx=".6" fill="none" stroke="#7a7a7a" stroke-width="1"/></svg>
<svg class="abs" style="left:437px;top:672px" width="11" height="11" viewBox="0 0 11 11"><g fill="none" stroke="#5b7ff2" stroke-width="1"><rect x=".9" y=".9" width="3.6" height="3.6"/><rect x="6.4" y=".9" width="3.6" height="3.6"/><rect x=".9" y="6.4" width="3.6" height="3.6"/></g><g fill="#5b7ff2"><rect x="2.2" y="2.2" width="1" height="1"/><rect x="7.7" y="2.2" width="1" height="1"/><rect x="2.2" y="7.7" width="1" height="1"/><rect x="6" y="6" width="2" height="1.4"/><rect x="8.6" y="6.6" width="1.8" height="1"/><rect x="6" y="8.6" width="1" height="1.8"/><rect x="8" y="9.3" width="1" height="1"/><rect x="9.6" y="9.3" width="1" height="1"/></g></svg>
<div class="td num link" style="left:453px;top:668px">88883456881514</div>
<div class="td lat" style="left:582px;top:666px">default</div>
<div class="td" style="left:762px;top:666px">微信小程序</div>
<div class="abs" style="left:942px;top:667px;width:39px;height:40px;border:1px solid #f2f2f2;border-radius:3px;background:#fff;overflow:hidden">
<svg width="39" height="40" viewBox="0 0 39 40" style="position:absolute;left:-1px;top:-1px">
<circle cx="19.9" cy="19.8" r="18.8" fill="#eaf5fe"/>
<path d="M10.3 8.3 Q9.4 8.2 9.2 9.4 L9.2 13.8 L15 11 Z" fill="#27507f"/>
<path d="M29.5 8.3 Q30.4 8.2 30.6 9.4 L30.6 13.8 L24.8 11 Z" fill="#27507f"/>
<ellipse cx="19.8" cy="20.2" rx="13.9" ry="10.3" fill="#68b3fb"/>
<path d="M7 31.6 Q12.5 29.2 19.8 29.4 Q27.1 29.2 32.8 31.6 Q31.4 35.6 28.6 38.2 L25.6 36.4 Q23.5 34.1 19.8 34.1 Q16.1 34.1 14 36.4 L11 38.2 Q8.4 35.6 7 31.6Z" fill="#68b3fb"/>
<ellipse cx="19.7" cy="21.6" rx="10.8" ry="8.6" fill="#3d2039"/>
<path d="M11.9 24 Q12 21.2 13.6 20 L14.8 22.6 L16.6 20.6 Q20 21.8 23.6 21.1 Q26.6 20.5 28.3 19.4 Q29.4 21.6 29.3 24.4 Q28.8 30.4 20 30.8 Q12.4 30.4 11.9 24Z" fill="#fdeae2"/>
<ellipse cx="16.1" cy="25.3" rx=".85" ry="1.2" fill="#111"/><ellipse cx="23.8" cy="25.3" rx=".85" ry="1.2" fill="#111"/>
</svg></div>
<div class="td" style="left:1187px;top:668px">微信用户</div>
<div class="abs" style="left:234px;top:724px;width:1646px;height:1px;background:#f4f4f4"></div>
<div class="abs cb" style="left:265px;top:739px"></div>
<div class="td num" style="left:327px;top:738px">13</div>
<svg class="abs" style="left:351px;top:742px" width="12" height="13" viewBox="0 0 12 13"><path d="M.8 8.2 V.8 H7.3" fill="none" stroke="#7a7a7a" stroke-width="1"/><rect x="2.7" y="2.8" width="6.4" height="8.2" rx=".6" fill="none" stroke="#7a7a7a" stroke-width="1"/></svg>
<svg class="abs" style="left:437px;top:742px" width="11" height="11" viewBox="0 0 11 11"><g fill="none" stroke="#5b7ff2" stroke-width="1"><rect x=".9" y=".9" width="3.6" height="3.6"/><rect x="6.4" y=".9" width="3.6" height="3.6"/><rect x=".9" y="6.4" width="3.6" height="3.6"/></g><g fill="#5b7ff2"><rect x="2.2" y="2.2" width="1" height="1"/><rect x="7.7" y="2.2" width="1" height="1"/><rect x="2.2" y="7.7" width="1" height="1"/><rect x="6" y="6" width="2" height="1.4"/><rect x="8.6" y="6.6" width="1.8" height="1"/><rect x="6" y="8.6" width="1" height="1.8"/><rect x="8" y="9.3" width="1" height="1"/><rect x="9.6" y="9.3" width="1" height="1"/></g></svg>
<div class="td num link" style="left:453px;top:738px">88886125483813</div>
<div class="td lat" style="left:582px;top:736px">default</div>
<div class="td" style="left:762px;top:736px">微信小程序</div>
<div class="abs" style="left:942px;top:737px;width:39px;height:40px;border:1px solid #f2f2f2;border-radius:3px;background:#fff;overflow:hidden">
<svg width="39" height="40" viewBox="0 0 39 40" style="position:absolute;left:-1px;top:-1px">
<circle cx="19.9" cy="19.8" r="18.8" fill="#eaf5fe"/>
<path d="M10.3 8.3 Q9.4 8.2 9.2 9.4 L9.2 13.8 L15 11 Z" fill="#27507f"/>
<path d="M29.5 8.3 Q30.4 8.2 30.6 9.4 L30.6 13.8 L24.8 11 Z" fill="#27507f"/>
<ellipse cx="19.8" cy="20.2" rx="13.9" ry="10.3" fill="#68b3fb"/>
<path d="M7 31.6 Q12.5 29.2 19.8 29.4 Q27.1 29.2 32.8 31.6 Q31.4 35.6 28.6 38.2 L25.6 36.4 Q23.5 34.1 19.8 34.1 Q16.1 34.1 14 36.4 L11 38.2 Q8.4 35.6 7 31.6Z" fill="#68b3fb"/>
<ellipse cx="19.7" cy="21.6" rx="10.8" ry="8.6" fill="#3d2039"/>
<path d="M11.9 24 Q12 21.2 13.6 20 L14.8 22.6 L16.6 20.6 Q20 21.8 23.6 21.1 Q26.6 20.5 28.3 19.4 Q29.4 21.6 29.3 24.4 Q28.8 30.4 20 30.8 Q12.4 30.4 11.9 24Z" fill="#fdeae2"/>
<ellipse cx="16.1" cy="25.3" rx=".85" ry="1.2" fill="#111"/><ellipse cx="23.8" cy="25.3" rx=".85" ry="1.2" fill="#111"/>
</svg></div>
<div class="td" style="left:1187px;top:738px">微信用户</div>
<div class="abs" style="left:234px;top:794px;width:1646px;height:1px;background:#f4f4f4"></div>
<div class="abs cb" style="left:265px;top:809px"></div>
<div class="td num" style="left:327px;top:808px">12</div>
<svg class="abs" style="left:351px;top:812px" width="12" height="13" viewBox="0 0 12 13"><path d="M.8 8.2 V.8 H7.3" fill="none" stroke="#7a7a7a" stroke-width="1"/><rect x="2.7" y="2.8" width="6.4" height="8.2" rx=".6" fill="none" stroke="#7a7a7a" stroke-width="1"/></svg>
<svg class="abs" style="left:437px;top:812px" width="11" height="11" viewBox="0 0 11 11"><g fill="none" stroke="#5b7ff2" stroke-width="1"><rect x=".9" y=".9" width="3.6" height="3.6"/><rect x="6.4" y=".9" width="3.6" height="3.6"/><rect x=".9" y="6.4" width="3.6" height="3.6"/></g><g fill="#5b7ff2"><rect x="2.2" y="2.2" width="1" height="1"/><rect x="7.7" y="2.2" width="1" height="1"/><rect x="2.2" y="7.7" width="1" height="1"/><rect x="6" y="6" width="2" height="1.4"/><rect x="8.6" y="6.6" width="1.8" height="1"/><rect x="6" y="8.6" width="1" height="1.8"/><rect x="8" y="9.3" width="1" height="1"/><rect x="9.6" y="9.3" width="1" height="1"/></g></svg>
<div class="td num link" style="left:453px;top:808px">88888671206512</div>
<div class="td lat" style="left:582px;top:806px">default</div>
<div class="td" style="left:762px;top:806px">微信小程序</div>
<div class="abs" style="left:942px;top:807px;width:39px;height:40px;border:1px solid #f2f2f2;border-radius:3px;background:#fff;overflow:hidden">
<svg width="39" height="40" viewBox="0 0 39 40" style="position:absolute;left:-1px;top:-1px">
<circle cx="19.9" cy="19.8" r="18.8" fill="#eaf5fe"/>
<path d="M10.3 8.3 Q9.4 8.2 9.2 9.4 L9.2 13.8 L15 11 Z" fill="#27507f"/>
<path d="M29.5 8.3 Q30.4 8.2 30.6 9.4 L30.6 13.8 L24.8 11 Z" fill="#27507f"/>
<ellipse cx="19.8" cy="20.2" rx="13.9" ry="10.3" fill="#68b3fb"/>
<path d="M7 31.6 Q12.5 29.2 19.8 29.4 Q27.1 29.2 32.8 31.6 Q31.4 35.6 28.6 38.2 L25.6 36.4 Q23.5 34.1 19.8 34.1 Q16.1 34.1 14 36.4 L11 38.2 Q8.4 35.6 7 31.6Z" fill="#68b3fb"/>
<ellipse cx="19.7" cy="21.6" rx="10.8" ry="8.6" fill="#3d2039"/>
<path d="M11.9 24 Q12 21.2 13.6 20 L14.8 22.6 L16.6 20.6 Q20 21.8 23.6 21.1 Q26.6 20.5 28.3 19.4 Q29.4 21.6 29.3 24.4 Q28.8 30.4 20 30.8 Q12.4 30.4 11.9 24Z" fill="#fdeae2"/>
<ellipse cx="16.1" cy="25.3" rx=".85" ry="1.2" fill="#111"/><ellipse cx="23.8" cy="25.3" rx=".85" ry="1.2" fill="#111"/>
</svg></div>
<div class="td" style="left:1187px;top:808px">微信用户</div>
</div></div>
<div class="abs" style="left:234px;top:234px;width:1px;height:583px;background:#f0f0f0"></div>
<div class="abs" style="left:1700px;top:156px;width:180px;height:661px;overflow:hidden">
<div class="abs" style="left:0;top:0;width:180px;height:78px;background:#f8f8f8"></div>
<div class="hl"  style="left:12px;top:13px">操作</div>
<div class="abs" style="left:0;top:78px;width:180px;height:1px;background:#f4f4f4"></div>
<div class="op" style="left:26px;top:87px">详情</div>
<div class="op" style="left:78px;top:87px">编辑</div>
<div class="op" style="left:130px;top:87px">删除</div>
<div class="abs" style="left:0;top:148px;width:180px;height:1px;background:#f4f4f4"></div>
<div class="op" style="left:26px;top:157px">详情</div>
<div class="op" style="left:78px;top:157px">编辑</div>
<div class="op" style="left:130px;top:157px">删除</div>
<div class="abs" style="left:0;top:218px;width:180px;height:1px;background:#f4f4f4"></div>
<div class="op" style="left:26px;top:227px">详情</div>
<div class="op" style="left:78px;top:227px">编辑</div>
<div class="op" style="left:130px;top:227px">删除</div>
<div class="abs" style="left:0;top:288px;width:180px;height:1px;background:#f4f4f4"></div>
<div class="op" style="left:26px;top:297px">详情</div>
<div class="op" style="left:78px;top:297px">编辑</div>
<div class="op" style="left:130px;top:297px">删除</div>
<div class="abs" style="left:0;top:358px;width:180px;height:1px;background:#f4f4f4"></div>
<div class="op" style="left:26px;top:367px">详情</div>
<div class="op" style="left:78px;top:367px">编辑</div>
<div class="op" style="left:130px;top:367px">删除</div>
<div class="abs" style="left:0;top:428px;width:180px;height:1px;background:#f4f4f4"></div>
<div class="op" style="left:26px;top:437px">详情</div>
<div class="op" style="left:78px;top:437px">编辑</div>
<div class="op" style="left:130px;top:437px">删除</div>
<div class="abs" style="left:0;top:498px;width:180px;height:1px;background:#f4f4f4"></div>
<div class="op" style="left:26px;top:507px">详情</div>
<div class="op" style="left:78px;top:507px">编辑</div>
<div class="op" style="left:130px;top:507px">删除</div>
<div class="abs" style="left:0;top:568px;width:180px;height:1px;background:#f4f4f4"></div>
<div class="op" style="left:26px;top:577px">详情</div>
<div class="op" style="left:78px;top:577px">编辑</div>
<div class="op" style="left:130px;top:577px">删除</div>
<div class="abs" style="left:0;top:638px;width:180px;height:1px;background:#f4f4f4"></div>
<div class="op" style="left:26px;top:647px">详情</div>
<div class="op" style="left:78px;top:647px">编辑</div>
<div class="op" style="left:130px;top:647px">删除</div>
</div>
<div class="abs" style="left:1680px;top:156px;width:20px;height:661px;background:linear-gradient(90deg,rgba(0,0,0,0),rgba(0,0,0,.022))"></div>
<div class="abs" style="left:1880px;top:156px;width:10px;height:671px;background:#f9f9f9;border-radius:5px 5px 0 0"></div>
<div class="abs" style="left:1880px;top:157px;width:10px;height:294px;background:#efefef;border-radius:5px"></div>
<div class="abs" style="left:234px;top:817px;width:1646px;height:11px;background:#f8f8f8;border-radius:0 0 0 5px"></div>
<div class="abs" style="left:234px;top:817px;width:638px;height:11px;background:#efefef;border-radius:5.5px"></div>
<div class="abs" style="left:1880px;top:817px;width:10px;height:11px;background:#e3e3e3"></div>
<div class="pg" style="left:1457px">&laquo;</div>
<div class="pg" style="left:1500px">&lsaquo;</div>
<div class="pg" style="left:1543px;width:33px;background:#2d91fd;border-color:#2d91fd;color:#fff;font-size:12.6px">1</div>
<div class="pg" style="left:1581px">&rsaquo;</div>
<div class="pg" style="left:1624px">&raquo;</div>
<div class="pt" style="left:1677px">每页</div>
<div class="pin" style="left:1706px">30</div>
<div class="pt" style="left:1761px">条</div>
<div class="pt" style="left:1783px">跳转到</div>
<div class="pin" style="left:1824px">1</div>
<div class="pt" style="left:1879px">页</div>
<div class="pt" style="left:1691px;width:200px;text-align:right;top:892px;word-spacing:1px">共 20 条数据 &nbsp;共 1 页</div>
</body></html>
